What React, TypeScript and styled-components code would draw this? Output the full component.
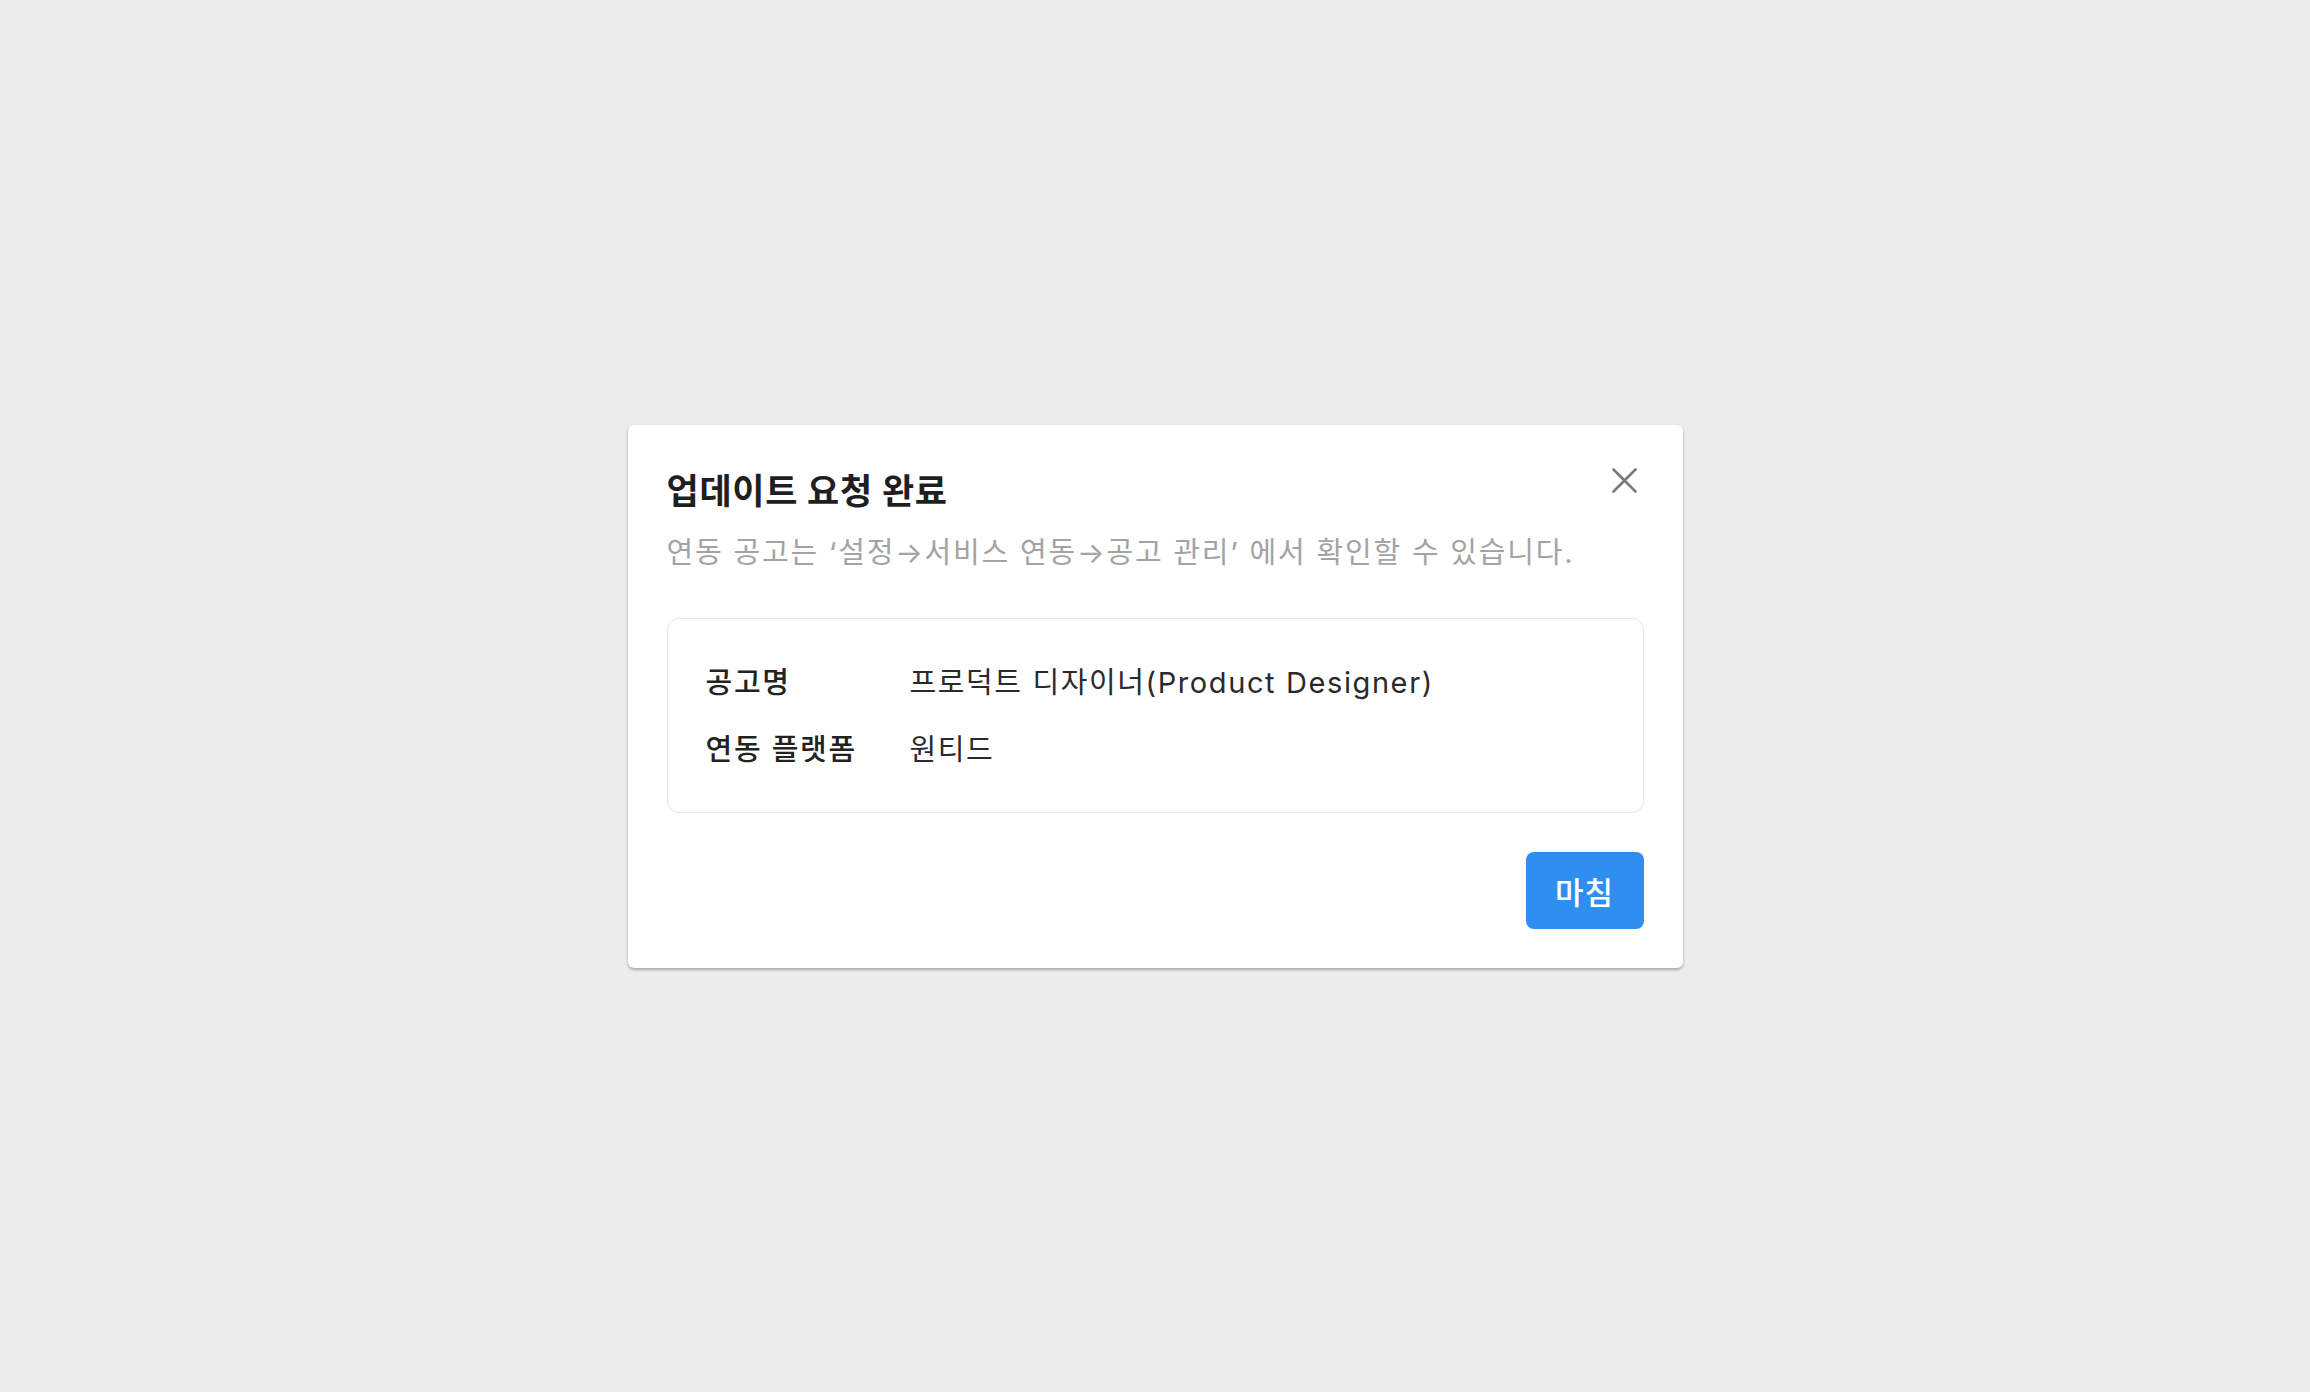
import React from "react";
import styled, { createGlobalStyle } from "styled-components";

const Global = createGlobalStyle`
  html, body { margin: 0; padding: 0; }
  body {
    background: #ececec;
    font-family: "Inter", "Noto Sans CJK KR", sans-serif;
    -webkit-font-smoothing: antialiased;
  }
`;

const Page = styled.div`
  width: 100vw;
  height: 100vh;
  display: flex;
  align-items: center;
  justify-content: center;
`;

const Dialog = styled.div`
  width: 1055px;
  box-sizing: border-box;
  padding: 39px;
  background: #ffffff;
  border-radius: 6px;
  box-shadow: 0 2px 3px rgba(0, 0, 0, 0.28), 0 0 1px rgba(0, 0, 0, 0.08);
  display: flex;
  flex-direction: column;
`;

const Header = styled.div`
  display: flex;
  align-items: flex-start;
  justify-content: space-between;
`;

const HeadText = styled.div`
  display: flex;
  flex-direction: column;
`;

const Title = styled.h2`
  margin: 3px 0 0;
  font-size: 35px;
  line-height: 48px;
  font-weight: 700;
  color: #1f1f1f;
  letter-spacing: 0.7px;
`;

const Subtitle = styled.p`
  margin: 18px 0 0;
  font-size: 29px;
  line-height: 40px;
  font-weight: 400;
  color: #a3a3a3;
  letter-spacing: 1.8px;
`;

const CloseButton = styled.button`
  width: 32px;
  height: 32px;
  margin: 1px 3px 0 0;
  padding: 0;
  border: none;
  background: transparent;
  display: flex;
  align-items: center;
  justify-content: center;
  cursor: pointer;
`;

const InfoBox = styled.div`
  margin-top: 45px;
  border: 1.5px solid #e6e6e6;
  border-radius: 12px;
  padding: 44px 38px 42px;
  display: flex;
  flex-direction: column;
  gap: 27px;
`;

const InfoRow = styled.div`
  display: grid;
  grid-template-columns: 204px 1fr;
  font-size: 29px;
  line-height: 40px;
`;

const Label = styled.span`
  font-weight: 500;
  color: #222222;
  letter-spacing: 1.7px;
`;

const Value = styled.span`
  font-weight: 400;
  color: #2a2a2a;
  letter-spacing: 1.6px;
`;

const Footer = styled.div`
  margin-top: 39px;
  display: flex;
  justify-content: flex-end;
`;

const PrimaryButton = styled.button`
  width: 118px;
  height: 77px;
  border: none;
  border-radius: 8px;
  background: #2f8ff0;
  color: #ffffff;
  font-family: inherit;
  font-size: 31px;
  font-weight: 500;
  letter-spacing: 1px;
  cursor: pointer;
`;

export default function App() {
  return (
    <>
      <Global />
      <Page>
        <Dialog>
          <Header>
            <HeadText>
              <Title>업데이트 요청 완료</Title>
              <Subtitle>
                연동 공고는 ‘설정→서비스 연동→공고 관리’ 에서 확인할 수 있습니다.
              </Subtitle>
            </HeadText>
            <CloseButton aria-label="닫기">
              <svg width="25" height="25" viewBox="0 0 25 25" fill="none">
                <path
                  d="M1.5 1.5L23.5 23.5M23.5 1.5L1.5 23.5"
                  stroke="#7a7a7a"
                  strokeWidth="2.6"
                  strokeLinecap="round"
                />
              </svg>
            </CloseButton>
          </Header>
          <InfoBox>
            <InfoRow>
              <Label>공고명</Label>
              <Value>프로덕트 디자이너(Product Designer)</Value>
            </InfoRow>
            <InfoRow>
              <Label>연동 플랫폼</Label>
              <Value>원티드</Value>
            </InfoRow>
          </InfoBox>
          <Footer>
            <PrimaryButton>마침</PrimaryButton>
          </Footer>
        </Dialog>
      </Page>
    </>
  );
}
